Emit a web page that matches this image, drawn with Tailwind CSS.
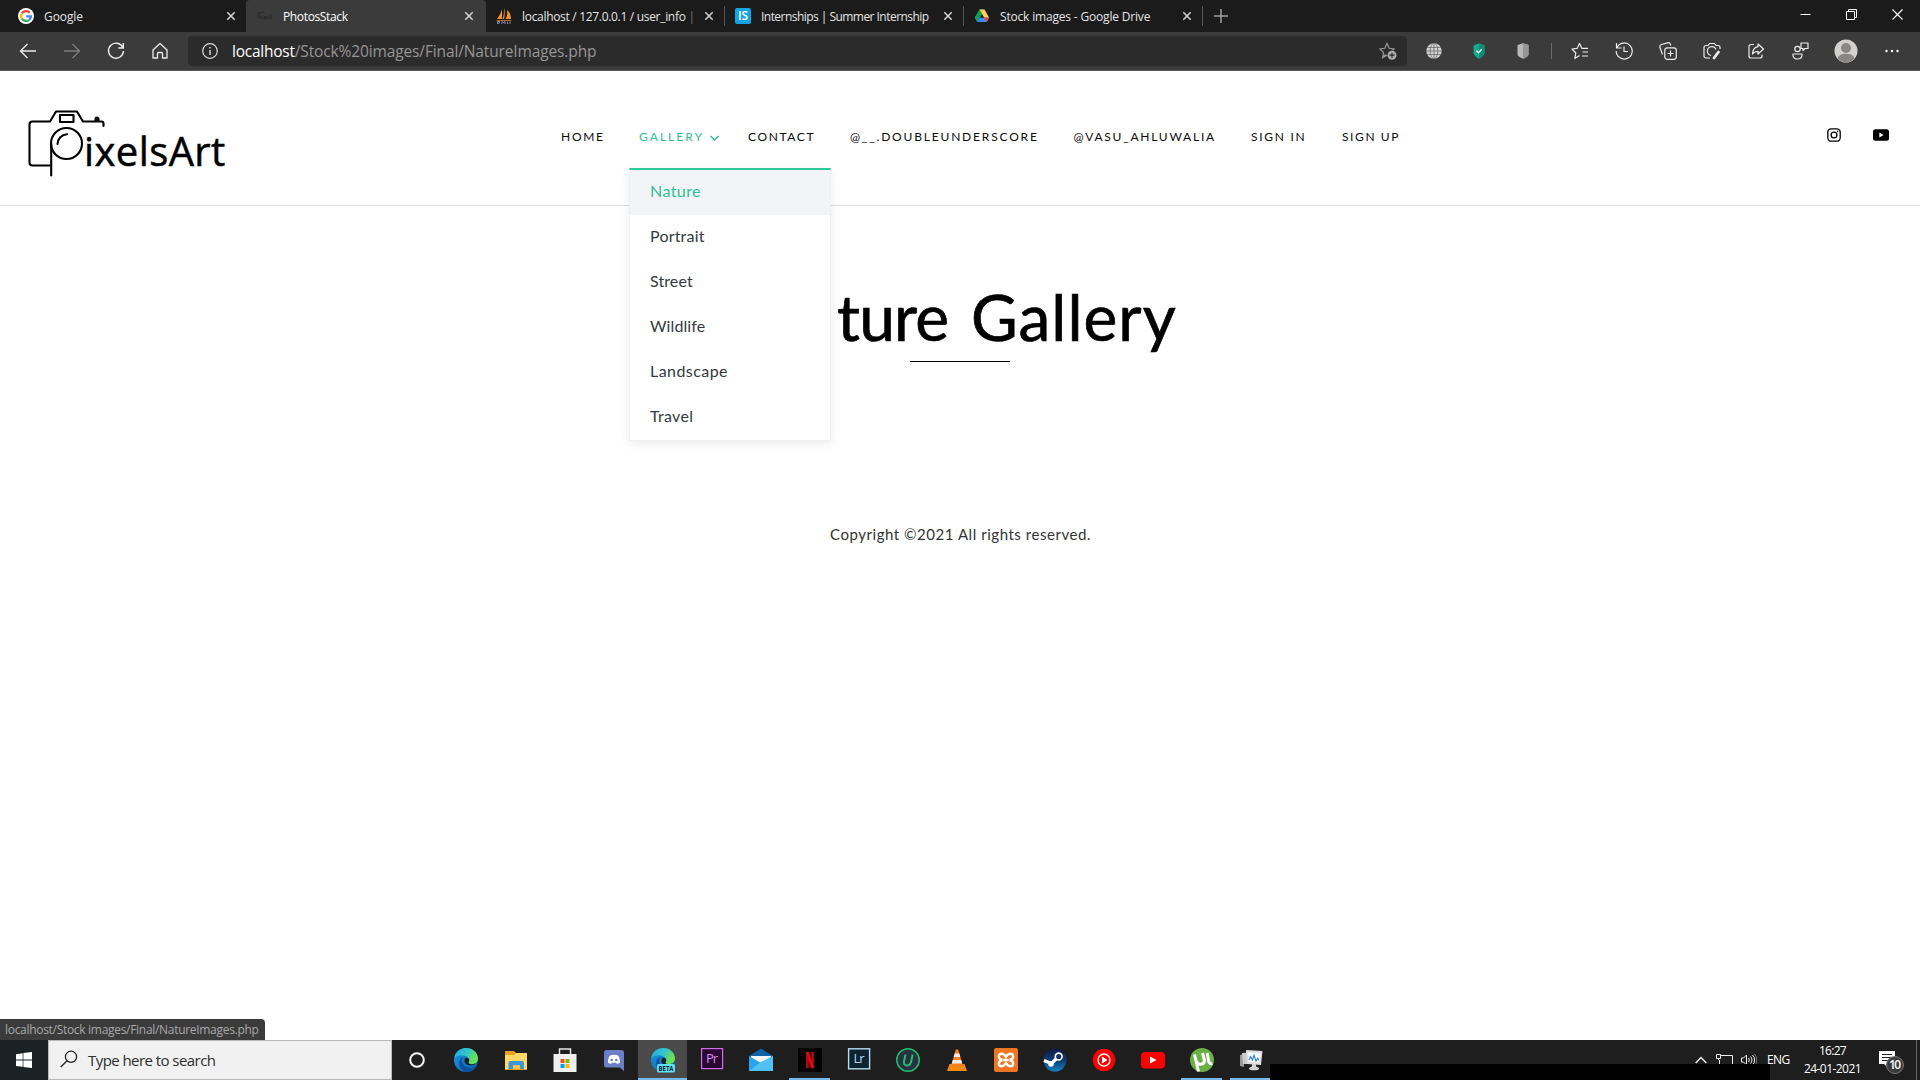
<!DOCTYPE html>
<html lang="en">
<head>
<meta charset="utf-8">
<title>PhotosStack</title>
<script src="https://cdn.jsdelivr.net/npm/@tailwindcss/browser@4"></script>
</head>
<body class="w-[1920px] h-[1080px] overflow-hidden bg-white flex flex-col relative font-['Open_Sans',sans-serif]">

<svg class="absolute w-0 h-0">
  <defs>
    <linearGradient id="eb" x1="0" y1="0" x2="1" y2="1"><stop offset="0" stop-color="#1b9de2"/><stop offset="1" stop-color="#0c59a4"/></linearGradient>
    <linearGradient id="eg" x1="0" y1="0" x2="1" y2=".4"><stop offset="0" stop-color="#2aa9df"/><stop offset=".5" stop-color="#2fc2d6"/><stop offset="1" stop-color="#6be34f"/></linearGradient>
    <linearGradient id="st" x1="0" y1="0" x2="0" y2="1"><stop offset="0" stop-color="#101b45"/><stop offset=".5" stop-color="#0d3a75"/><stop offset="1" stop-color="#1484c0"/></linearGradient>
    <symbol id="x" viewBox="0 0 10 10"><path d="M1.3 1.3l7.4 7.4M8.7 1.3L1.3 8.7" stroke="#d6d6d6" stroke-width="1.5" fill="none"/></symbol>
    <symbol id="edge" viewBox="0 0 24 24">
      <circle cx="12" cy="12" r="12" fill="url(#eb)"/>
      <path d="M.3 9.800C1.600 3.500 6.500 0 12 0c7 0 12 5 12 10.500 0 3.400-2.600 5.700-5.800 5.700-2.600 0-4-1-3.400-2 .8-1.300.8-2.800-.3-4.200C12.500 7.300 4.600 5.500.3 9.800z" fill="url(#eg)"/>
      <path d="M8 12.500c0-1.700.8-3 2-3.800-2.200.2-5.400 3.200-4.600 8 .7 4 4 6.800 7.600 7.200 4 .2 7.300-2 9.400-5.400-5.600 3.800-14.400.6-14.400-6z" fill="#0d50a0"/>
      <path d="M11.500 10c1.700-.8 3.500.2 3.600 1.900.1 1.500-1.200 1.900-.6 3.200.8 1.500 4.500 1.600 6.800.5-2.300 2.600-9.300 2.400-10.700-1.600-.5-1.500 0-3.200.9-4z" fill="#1e1e1e"/>
    </symbol>
  </defs>
</svg>

<!-- Tab strip -->
<div class="h-8 shrink-0 bg-[#1b1b1b] flex text-xs text-[#e4e4e4] leading-[31px] whitespace-nowrap">
  <div class="w-[246px] flex items-center pl-[18px] pr-[10px]">
    <svg class="size-4" viewBox="0 0 16 16"><circle cx="8" cy="8" r="8" fill="#fff"/><g fill="none" stroke-width="2.200"><path d="M11.700 4.700A5 5 0 0 0 3.800 5.300" stroke="#ea4335"/><path d="M3.800 5.300a5 5 0 0 0 0 5.400" stroke="#fbbc05"/><path d="M3.800 10.700a5 5 0 0 0 7.400 1.100" stroke="#34a853"/><path d="M11.200 11.800A5 5 0 0 0 13 8.300H8.200" stroke="#4285f4"/></g></svg>
    <span class="ml-[10px] tracking-[-0.09px] flex-1">Google</span><svg class="size-[10px]"><use href="#x"/></svg>
  </div>
  <div class="w-[240px] bg-[#3b3b3b] rounded-t-[4px] flex items-center pl-[11px] pr-[12px] text-white">
    <svg class="size-4" viewBox="0 0 16 16" fill="none" stroke="#222"><path d="M1 10V5h3l1-1h2M3 11V7" stroke-width=".8"/><path d="M5 8v3M7 8l2 3M9 8l-2 3M10 8v3M12 8v3M14 7v4" stroke="#292929"/></svg>
    <span class="ml-[10px] tracking-[-0.36px] flex-1">PhotosStack</span><svg class="size-[10px]"><use href="#x"/></svg>
  </div>
  <div class="w-[239px] flex items-center pl-[10px] pr-[11px] relative">
    <svg class="size-4" viewBox="0 0 16 16"><path d="M6 1v10H1C3 8 5 5 6 1zM8 0c1 3 1 7 0 11H6.500C8 7 8 4 8 0zM11 2c3 2 4 6 4 9H9.500c2-3 2-6 1.500-9z" fill="#f29130"/><path d="M0 12h16l-1 1H1z" fill="#b5651d"/><path d="M1.500 16v-2.500h2V15h-2M6 16v-2.500l1.500 1 1.500-1V16M11.500 13.500V16M14 13.500V16" fill="none" stroke="#8a8fc0"/></svg>
    <span class="ml-[10px] tracking-[-0.31px] flex-1 overflow-hidden">localhost / 127.0.0.1 / user_info <span class="text-[#777]">|</span></span><svg class="size-[10px] ml-2 shrink-0"><use href="#x"/></svg>
    <i class="absolute right-0 top-[6px] h-5 w-px bg-[#555]"></i>
  </div>
  <div class="w-[239px] flex items-center pl-[10px] pr-[11px] relative">
    <svg class="size-4" viewBox="0 0 16 16"><rect width="16" height="16" rx="2" fill="#16a5e3"/><text x="8" y="12.200" text-anchor="middle" font-size="12" font-weight="600" fill="#fff" font-family="Open Sans, sans-serif" textLength="10">IS</text></svg>
    <span class="ml-[10px] tracking-[-0.54px] flex-1">Internships | Summer Internship</span><svg class="size-[10px]"><use href="#x"/></svg>
    <i class="absolute right-0 top-[6px] h-5 w-px bg-[#555]"></i>
  </div>
  <div class="w-[239px] flex items-center pl-[10px] pr-[11px] relative">
    <svg class="size-4" viewBox="0 0 16 16"><path d="M5.500 1.500h5L8 6 3.300 14 .8 9.700z" fill="#1fa463"/><path d="M5.500 1.500h5l4.700 8.200h-5z" fill="#ffcf48"/><path d="M5.500 1.500L8 6 5.600 10 3.300 14 .8 9.700z" fill="#0f9d58"/><path d="M5.700 9.700h9.500L12.700 14H3.300z" fill="#4285f4"/><path d="M10.200 9.700h5L12.700 14z" fill="#ea4335"/></svg>
    <span class="ml-[10px] tracking-[-0.18px] flex-1">Stock images - Google Drive</span><svg class="size-[10px]"><use href="#x"/></svg>
    <i class="absolute right-0 top-[6px] h-5 w-px bg-[#555]"></i>
  </div>
  <div class="flex-1 flex items-center pl-[11px]">
    <svg class="size-[14px]" viewBox="0 0 14 14"><path d="M7 0v14M0 7h14" stroke="#a0a0a0" stroke-width="1.500"/></svg>
  </div>
  <div class="flex h-[29px] items-center gap-[35px] pr-[17px]">
    <svg class="w-[11px] h-[11px]" viewBox="0 0 11 11"><path d="M.5 5.500h10" stroke="#fff"/></svg>
    <svg class="w-[11px] h-[11px]" viewBox="0 0 11 11" fill="none" stroke="#fff"><path d="M.5 2.500h8v8h-8zM2.500 2.500v-2h8v8h-2"/></svg>
    <svg class="w-[11px] h-[11px]" viewBox="0 0 11 11"><path d="M.5.5l10 10M10.500.5l-10 10" stroke="#fff" stroke-width="1.200"/></svg>
  </div>
</div>

<!-- Toolbar -->
<div class="h-[39px] shrink-0 bg-[#3b3b3b] border-b border-[#585858] flex items-center">
  <div class="flex items-center gap-6 pl-[18px]">
    <svg class="size-5" viewBox="0 0 20 20" fill="none" stroke="#ececec" stroke-width="1.300"><path d="M18 10H2.500M9.500 3L2.500 10l7 7"/></svg>
    <svg class="size-5" viewBox="0 0 20 20" fill="none" stroke="#7d7d7d" stroke-width="1.300"><path d="M2 10h15.500M10.500 3l7 7-7 7"/></svg>
    <svg class="size-5" viewBox="0 0 20 20" fill="none" stroke="#ececec" stroke-width="1.400"><path d="M16.800 6.500A7.500 7.500 0 1 0 17.500 10M17.300 2v5h-5"/></svg>
    <svg class="size-5" viewBox="0 0 20 20" fill="none" stroke="#ececec" stroke-width="1.300" stroke-linejoin="round"><path d="M3 9l7-6.500L17 9v8h-4.500v-4.500a1 1 0 0 0-1-1h-3a1 1 0 0 0-1 1V17H3z"/></svg>
  </div>
  <div class="ml-[18px] w-[1219px] h-[30px] bg-[#2b2b2b] rounded-[4px] flex items-center pl-[14px] pr-[10px] text-[15.5px]">
    <svg class="size-4" viewBox="0 0 16 16" fill="none" stroke="#dcdcdc" stroke-width="1.200"><circle cx="8" cy="8" r="7.300"/><path d="M8 7v5M8 4v1.500" stroke-width="1.400"/></svg>
    <span class="ml-[14px] leading-[30px] flex-1"><span class="text-white tracking-[-0.24px]">localhost</span><span class="text-[#969696] tracking-[-0.13px]">/Stock%20images/Final/NatureImages.php</span></span>
    <svg class="size-[18px]" viewBox="0 0 18 18" fill="none" stroke="#999"><path d="M6.500 12.500L3.700 15.500l.8-5L1 7l4.800-.7L8 1.500l2.200 4.800L15 7l-1.500 1.400M4 15.500l4-2.200" stroke-width="1.200"/><circle cx="13" cy="13.200" r="4.500" fill="#aaa" stroke="none"/><path d="M13 10.700v5M10.500 13.200h5" stroke="#2b2b2b" stroke-width="1.200"/></svg>
  </div>
  <div class="flex items-center ml-[19px]">
    <svg class="size-4" viewBox="0 0 16 16"><circle cx="8" cy="8" r="7.700" fill="#d2d2d2"/><g fill="none" stroke="#777" stroke-width=".9"><ellipse cx="8" cy="8" rx="3.800" ry="7.700"/><path d="M8 0v16M0 8h16M1 4.500h14M1 11.500h14"/></g></svg>
    <svg class="ml-[28.5px] size-4" viewBox="0 0 16 16"><path d="M8 .3l5.500 2.200V9.500C13.500 12 11 14.500 8 15.700 5 14.500 2.500 12 2.500 9.500V2.500z" fill="#17a98b"/><path d="M8 .3l5.500 2.200V9.500C13.500 12 11 14.500 8 15.700z" fill="#0e8b73"/><path d="M5.500 7.800l2 2 3.200-3.500" fill="none" stroke="#fff" stroke-width="1.300"/></svg>
    <svg class="ml-7 size-4" viewBox="0 0 16 16"><path d="M8 .3l5.500 1.700V11.500C13.500 13 11 14.800 8 15.700 5 14.800 2.500 13 2.500 11.500V2z" fill="#b8b8b8"/><path d="M8 .3l5.500 1.700V11.500C13.500 13 11 14.800 8 15.700z" fill="#969696"/></svg>
    <i class="ml-[20.5px] w-px h-4 bg-[#6a6a6a]"></i>
    <svg class="ml-[19px] size-[18px]" viewBox="0 0 18 18" fill="none" stroke="#ececec" stroke-width="1.200" stroke-linejoin="round"><path d="M8.500 13.500l-4.700 3 1-5.500L1 7l5.200-.7L8.500 1.500 10.800 6.300H17M11.500 10H17M11 14h6"/></svg>
    <svg class="ml-[26px] size-[18px]" viewBox="0 0 18 18" fill="none" stroke="#ececec" stroke-width="1.200"><path d="M2 5.500A8 8 0 1 1 1.200 9M1.500 1v5h5M9 4.500v5h4"/></svg>
    <svg class="ml-[26px] size-[18px]" viewBox="0 0 18 18" fill="none" stroke="#ececec" stroke-width="1.200"><rect x="5.800" y="5.800" width="11.500" height="11.500" rx="2.500"/><path d="M11.500 8.500v6M8.500 11.500h6M3.500 12.500L1 5.500C.5 4 1 3 2.500 2.500l6-1.700c1.500-.4 2.500 0 3 1.700l.4 1"/></svg>
    <svg class="ml-[26px] size-[18px]" viewBox="0 0 18 18" fill="none" stroke="#ececec" stroke-width="1.200"><path d="M7 16H3a2 2 0 0 1-2-2V5.500a2 2 0 0 1 2-2h2l1.500-2h5l1.500 2h2a2 2 0 0 1 2 2V7M8 13.500a4.500 4.500 0 1 1 5-6"/><path d="M15.500 10l-4.500 6" stroke-width="2.800" stroke-linecap="round"/></svg>
    <svg class="ml-[26px] size-[18px]" viewBox="0 0 18 18" fill="none" stroke="#ececec" stroke-width="1.200" stroke-linejoin="round"><path d="M7 2.500H4a2 2 0 0 0-2 2V14a2 2 0 0 0 2 2h9a2 2 0 0 0 2-2v-1.500M11 2l5.500 5-5.500 5V9.300C8.500 9.300 7 10 5.500 12c.2-4 2-6.700 5.500-7.300z"/></svg>
    <svg class="ml-[26px] size-[18px]" viewBox="0 0 18 18" fill="none" stroke="#ececec" stroke-width="1.200" stroke-linejoin="round"><circle cx="6.500" cy="7" r="2.700"/><path d="M2 12h9v1c0 2.500-2 4-4.500 4S2 15.500 2 13zM10 1h7v5.500h-3l-2 2v-2h-2z"/></svg>
    <svg class="ml-[25px] size-6" viewBox="0 0 24 24"><circle cx="12" cy="12" r="11.500" fill="#d3d1ce"/><circle cx="12" cy="9" r="5" fill="#8a8683"/><path d="M3.500 19.500C5 15.500 8 14.800 12 14.800s7 .7 8.500 4.700A11.500 11.500 0 0 1 3.500 19.500z" fill="#8a8683"/></svg>
    <svg class="ml-[26px] w-4 h-4" viewBox="0 0 16 16" fill="#fff"><circle cx="2.500" cy="8" r="1.200"/><circle cx="8" cy="8" r="1.200"/><circle cx="13.500" cy="8" r="1.200"/></svg>
  </div>
</div>

<!-- Web page -->
<main class="flex-1 relative text-black font-['Lato',sans-serif]">
  <header class="h-[135px] border-b border-[#dcdcdc] flex">
    <div class="w-[561px] pl-[27px] pt-[38px] flex">
      <svg class="w-[80px] h-[68px] shrink-0" viewBox="27 109 80 68" fill="none" stroke="#000" stroke-width="2.100" stroke-linecap="round" stroke-linejoin="round">
        <path d="M51 165.500H32.500a3 3 0 0 1-3-3V124.500a3 3 0 0 1 3-3H50L56 111.500H77L83 121.500H101.500a2 2 0 0 1 2 2V126"/>
        <rect x="60" y="115" width="13.500" height="7"/><circle cx="66.500" cy="143.500" r="15.500"/><path d="M51.200 143.500V175.500M57.500 144a10 10 0 0 1 9.500-9.800"/>
        <path d="M95.500 120.500v-1.500a1.500 1.500 0 0 1 3 0v1.500z" fill="#000"/>
      </svg>
      <span class="-ml-[23px] mt-[15px] text-[40px] leading-[54px] tracking-[0.4px] [-webkit-text-stroke:0.5px_#000] font-['Open_Sans',sans-serif]">ixelsArt</span>
    </div>
    <nav class="flex-1 flex text-xs leading-[132px] whitespace-nowrap text-[#0b0b0b]">
      <a class="w-[78px] tracking-[1.72px]">HOME</a>
      <a class="w-[109px] tracking-[2.04px] text-[#2ec294] flex items-center h-[132px]">GALLERY<svg class="ml-[6px] size-[9px]" viewBox="0 0 9 9" fill="none" stroke="#2ec294" stroke-width="1.500"><path d="M.5 3l4 4 4-4"/></svg></a>
      <a class="w-[102px] tracking-[1.6px]">CONTACT</a>
      <a class="w-[223.5px] tracking-[1.82px]">@__.DOUBLEUNDERSCORE</a>
      <a class="w-[177.5px] tracking-[1.76px]">@VASU_AHLUWALIA</a>
      <a class="w-[91px] tracking-[1.72px]">SIGN IN</a>
      <a class="tracking-[1.6px]">SIGN UP</a>
    </nav>
    <div class="flex items-center h-[128px] gap-[32px] pr-[31px]">
      <svg class="size-[14px]" viewBox="0 0 14 14" fill="none" stroke="#000" stroke-width="1.300"><rect x=".8" y=".8" width="12.400" height="12.400" rx="3.500"/><circle cx="7" cy="7" r="2.900"/><circle cx="10.600" cy="3.400" r=".8" fill="#000" stroke="none"/></svg>
      <svg class="w-4 h-3" viewBox="0 0 16 12"><rect y=".3" width="16" height="11.400" rx="2.500"/><path d="M6.300 3.500v5l4.300-2.500z" fill="#fff"/></svg>
    </div>
  </header>

  <section class="flex flex-col items-center">
    <h1 class="mt-[71px] h-[80px] text-[64px] leading-[80px] whitespace-nowrap w-[428px] flex justify-end [-webkit-text-stroke:0.7px_#000]"><span class="w-[91px]">Na</span><span class="w-[134px] tracking-[-0.8px]">ture</span><span class="w-[203px] tracking-[1px]">Gallery</span></h1>
    <i class="mt-[4px] w-[100px] h-px bg-black"></i>
    <p class="mt-[160px] text-[15px] leading-6 tracking-[0.54px] text-[#333] pl-px">Copyright ©2021 All rights reserved.</p>
  </section>

  <!-- Gallery dropdown, laid over the heading -->
  <ul class="absolute left-[629px] top-[97px] w-[202px] h-[273px] bg-white border border-[#edf0f5] border-t-2 border-t-[#2ec79b] shadow-[0_3px_10px_rgba(0,0,0,0.08)] text-base leading-[41px] text-[#343a40]">
    <li class="h-[45px] pl-[20px] bg-[#f3f4f8] text-[#2ec294] tracking-[0.42px]">Nature</li>
    <li class="h-[45px] pl-[20px] tracking-[0.2px]">Portrait</li>
    <li class="h-[45px] pl-[20px] tracking-[0.1px]">Street</li>
    <li class="h-[45px] pl-[20px] tracking-[0.1px]">Wildlife</li>
    <li class="h-[45px] pl-[20px] tracking-[0.44px]">Landscape</li>
    <li class="h-[45px] pl-[20px] tracking-[0.3px]">Travel</li>
  </ul>

  <div class="absolute left-0 bottom-0 h-[21px] w-[265px] rounded-tr-[4px] bg-[#3b3b3b] pl-[5px] text-xs leading-[21px] tracking-[-0.3px] whitespace-nowrap text-[#a8a8a8] font-['Open_Sans',sans-serif]">localhost/Stock images/Final/NatureImages.php</div>
</main>

<!-- Taskbar -->
<footer class="h-10 shrink-0 bg-[#1e1e1e] flex relative">
  <div class="w-12 bg-[#1b2226] flex items-center justify-center"><svg class="size-4" viewBox="0 0 16 16" fill="#fff"><path d="M0 2.200L6.700 1.200V7.600H0zM7.400 1.100L16 0v7.600H7.400zM0 8.400h6.700v6.400L0 13.900zM7.400 8.400H16V16l-8.600-1.100z"/></svg></div>
  <div class="w-[344px] bg-[#f1f1f1] border border-[#b9b9b9] flex items-center pl-[11px] text-[15px] leading-[38px] tracking-[-0.56px] text-[#2e2e2e]">
    <svg class="size-[18px] mr-[10px] mb-[2px]" viewBox="0 0 18 18" fill="none" stroke="#222" stroke-width="1.300"><circle cx="11" cy="6.800" r="5.600"/><path d="M7 10.800L.8 17"/></svg>Type here to search
  </div>
  <div class="w-[49px] flex items-center justify-center"><svg class="size-4" viewBox="0 0 16 16"><circle cx="8" cy="8" r="6.800" fill="none" stroke="#f5f5f5" stroke-width="2"/></svg></div>
  <div class="w-[50px] flex items-center justify-center"><svg class="size-6"><use href="#edge"/></svg></div>
  <div class="w-[49px] flex items-center justify-center"><svg class="size-6" viewBox="0 0 24 24"><path d="M1 3h9l2 2h11v17H1z" fill="#e9a21a"/><path d="M1 7h9l2-2h11v16H1z" fill="#ffd868"/><path d="M5.500 13h13l1.500 1.500V21h-4v-4H9v4H4.500v-6.500z" fill="#3b96dc"/><path d="M9 17h7v4H9z" fill="#f5c24e"/></svg></div>
  <div class="w-[49px] flex items-center justify-center"><svg class="size-6" viewBox="0 0 24 24"><path d="M6.500 7V1h11v6" fill="none" stroke="#e8e8e8" stroke-width="1.500"/><path d="M.5 6h23v18h-23z" fill="#f0f0f0"/><path d="M7.500 11h4v4h-4z" fill="#f25022"/><path d="M12.500 11h4v4h-4z" fill="#7fba00"/><path d="M7.500 16h4v4h-4z" fill="#00a4ef"/><path d="M12.500 16h4v4h-4z" fill="#ffb900"/></svg></div>
  <div class="w-[49px] flex items-center justify-center"><svg class="size-6" viewBox="0 0 24 24"><path d="M4.500 2h15A2.500 2.500 0 0 1 22 4.500V23l-4-3.500H4.500A2.500 2.500 0 0 1 2 17V4.500A2.500 2.500 0 0 1 4.500 2z" fill="#6b7fc4"/><path d="M8 7.500c2.500-1 5.500-1 8 0 1.500 2 2.200 4.500 2 7-1 .8-2 1.200-3 1.400l-.8-1.200h-4.400L9 15.900c-1-.2-2-.6-3-1.400-.2-2.500.5-5 2-7z" fill="#fff"/><circle cx="9.700" cy="12" r="1.300" fill="#6b7fc4"/><circle cx="14.300" cy="12" r="1.300" fill="#6b7fc4"/></svg></div>
  <div class="w-[49px] flex items-center justify-center bg-[#4a4a4a] border-b-2 border-[#76b9ed] pt-[2px]"><svg class="size-6 overflow-visible" viewBox="0 0 24 24"><use href="#edge" width="24" height="24"/><rect x="6" y="16" width="18" height="8.500" rx="1.500" fill="#5ee0f5"/><text x="15" y="23" text-anchor="middle" font-size="7.500" font-weight="700" font-family="Open Sans, sans-serif" textLength="15" lengthAdjust="spacingAndGlyphs" fill="#10262c">BETA</text></svg></div>
  <div class="w-[49px] flex items-center justify-center"><svg class="size-6 overflow-visible" viewBox="0 0 24 24"><rect x="1.600" y=".6" width="21" height="20" fill="#2a0634" stroke="#d36be8" stroke-width="1.200"/><text x="12" y="15" text-anchor="middle" font-size="13" font-family="Open Sans, sans-serif" textLength="12" fill="#dc8af0">Pr</text></svg></div>
  <div class="w-[49px] flex items-center justify-center"><svg class="size-6" viewBox="0 0 24 24"><path d="M0 8L12 .5 24 8v4H0z" fill="#0f62a8"/><path d="M2 8h20v9H2z" fill="#f4f4f4"/><path d="M0 8l12 7 12-7v15H0z" fill="#2aa3ea"/><path d="M0 23l12-9L24 8v15z" fill="#4fc1f5"/></svg></div>
  <div class="w-[49px] flex items-center justify-center relative"><svg class="size-6" viewBox="0 0 24 24"><path d="M0 0h24v24H0z" fill="#000"/><path d="M8 4h2.800v16L8 20.400zM13.200 4H16v16.400l-2.800-.4z" fill="#b1060f"/><path d="M8 4h2.800L16 20.400l-2.900-.4z" fill="#e50914"/></svg><i class="absolute bottom-0 inset-x-[4px] h-[2px] bg-[#76b9ed]"></i></div>
  <div class="w-[49px] flex items-center justify-center"><svg class="size-6" viewBox="0 0 24 24"><rect x="1.600" y=".8" width="21" height="20" fill="#0c2431" stroke="#b5dcf0" stroke-width="1.400"/><text x="12" y="15" text-anchor="middle" font-size="13" font-family="Open Sans, sans-serif" textLength="11" fill="#b5dcf0">Lr</text></svg></div>
  <div class="w-[49px] flex items-center justify-center"><svg class="size-6" viewBox="0 0 24 24" fill="none"><circle cx="12" cy="12" r="11.200" fill="#29303f" stroke="#1fbf70" stroke-width="1.500"/><path d="M9.500 6.500L8 13.500c-.5 2.500.8 4 3 4s3.500-1.300 4-3.500l1.700-7.500" stroke="#1fbf70" stroke-width="2"/></svg></div>
  <div class="w-[49px] flex items-center justify-center"><svg class="size-6" viewBox="0 0 24 24"><path d="M4.500 16h15l2.500 7H2z" fill="#f08a12"/><path d="M10.800 1.500h2.400L18 18c-3 2-9 2-12 0z" fill="#f5821f"/><path d="M9.700 5.500h4.600l1 3.500H8.700zM7.800 12h8.400l1 3.500H6.800z" fill="#ececec"/></svg></div>
  <div class="w-[49px] flex items-center justify-center"><svg class="size-6" viewBox="0 0 24 24"><rect width="24" height="24" rx="2" fill="#ee7623"/><path d="M9.300 12H14.700M8.500 11.800C6 11.500 4.800 10.300 4.800 8.500S6 5.800 7.800 5.800s2.900 1 4.200 3c1.300-2 2.400-3 4.200-3s3 1 3 2.700-1.200 3-3.700 3.300M8.500 12.200c-2.500.3-3.700 1.500-3.700 3.300s1.200 2.700 3 2.700 2.900-1 4.200-3c1.300 2 2.400 3 4.200 3s3-1 3-2.700-1.200-3-3.700-3.300" fill="none" stroke="#fff" stroke-width="2.400"/></svg></div>
  <div class="w-[49px] flex items-center justify-center"><svg class="size-6" viewBox="0 0 24 24"><circle cx="12" cy="12" r="11.500" fill="url(#st)"/><path d="M1 12.500l7.500 3L15 9" fill="none" stroke="#fff" stroke-width="3.200"/><circle cx="15.700" cy="8.500" r="3.400" fill="#17305f" stroke="#fff" stroke-width="1.600"/><circle cx="8" cy="16" r="2.800" fill="#fff"/></svg></div>
  <div class="w-[49px] flex items-center justify-center"><svg class="size-6" viewBox="0 0 24 24"><circle cx="12" cy="12" r="11.200" fill="#f00"/><circle cx="12" cy="12" r="6" fill="none" stroke="#fff" stroke-width="1.300"/><path d="M10 8.500v7l5.500-3.500z" fill="#fff"/></svg></div>
  <div class="w-[49px] flex items-center justify-center"><svg class="size-6" viewBox="0 0 24 24"><rect y="4" width="24" height="16.500" rx="4" fill="#f00"/><path d="M9 8.500v7l6.500-3.500z" fill="#fff"/></svg></div>
  <div class="w-[49px] flex items-center justify-center relative"><svg class="size-6" viewBox="0 0 24 24"><circle cx="12" cy="12" r="12" fill="#69b145"/><path d="M4.500 6.500l4 17M6.500 13c1 4.500 8 4 8-.5L12.500 5M17.300 5l1.300 8c.4 2.300 1.300 3 3.700 2.500" fill="none" stroke="#fff" stroke-width="3"/></svg><i class="absolute bottom-0 inset-x-[4px] h-[2px] bg-[#76b9ed]"></i></div>
  <div class="w-[49px] flex items-center justify-center relative"><svg class="size-6" viewBox="0 0 24 24"><path d="M1 7l4-1v13l-4-1z" fill="#999"/><path d="M3 5l14-1v12H4z" fill="#ccc"/><path d="M7 2l16.500 1-1.500 14-14-1z" fill="#dedede"/><path d="M9 4.500l12.500.7-1.200 9.500L9.500 14z" fill="#fafdff"/><path d="M10 12l1.500-3.500L13.500 12l1.500-5 2 6 1.500-2.500 1.500 1.500" fill="none" stroke="#2f7fd0" stroke-width="1.100"/><path d="M13 16h4v2.500c2 .5 3 1.200 3 2.200 0 2-10 2-10 0 0-1 1-1.700 3-2.200z" fill="#d5d5d5"/></svg><i class="absolute bottom-0 inset-x-[4px] h-[2px] bg-[#76b9ed]"></i></div>
  <div class="flex-1"></div>
  <div class="flex items-center text-white text-xs">
    <svg class="w-3 h-2" viewBox="0 0 12 8" fill="none" stroke="#eee" stroke-width="1.400"><path d="M.7 7L6 1.500 11.300 7"/></svg>
    <svg class="ml-[9px] w-[17px] h-3" viewBox="0 0 17 12" fill="none" stroke="#eee"><path d="M5 1.500h11.500v9h-13V6M.5.5h4v4h-4zM2.500 4.500V6"/></svg>
    <svg class="ml-2 w-4 h-3" viewBox="0 0 16 12" fill="none" stroke="#eee"><path d="M.5 4h2L5.500 1v10l-3-3h-2zM7.500 4a3 3 0 0 1 0 4M9.500 2.500a5 5 0 0 1 0 7"/><path d="M11.500 1a7 7 0 0 1 0 10" /><path d="M13.500 0a9 9 0 0 1 0 12" stroke="#777"/></svg>
    <span class="ml-[10px] tracking-[-0.6px] w-[36px]">ENG</span>
    <div class="w-[59px] leading-[18px] text-center"><div class="tracking-[-0.7px]">16:27</div><div class="tracking-[-0.55px]">24-01-2021</div></div>
    <svg class="ml-[17px] w-[26px] h-7 mr-[11px]" viewBox="0 0 26 28"><path d="M0 5h16v13H8v3l-3-3H0z" fill="#fff"/><path d="M3 8.500h10M3 11.500h10M3 14.500h10" stroke="#222"/><circle cx="16" cy="19" r="8.500" fill="#3a3a3a" stroke="#777"/><text x="16" y="23" text-anchor="middle" font-size="12" font-weight="600" textLength="12" font-family="Open Sans, sans-serif" fill="#fff">10</text></svg>
    <i class="w-px h-10 bg-[#6a6a6a] mr-[3px]"></i>
  </div>
  <div class="absolute left-[1270px] top-[24px] w-[500px] h-4 bg-black"></div>
</footer>
</body>
</html>
